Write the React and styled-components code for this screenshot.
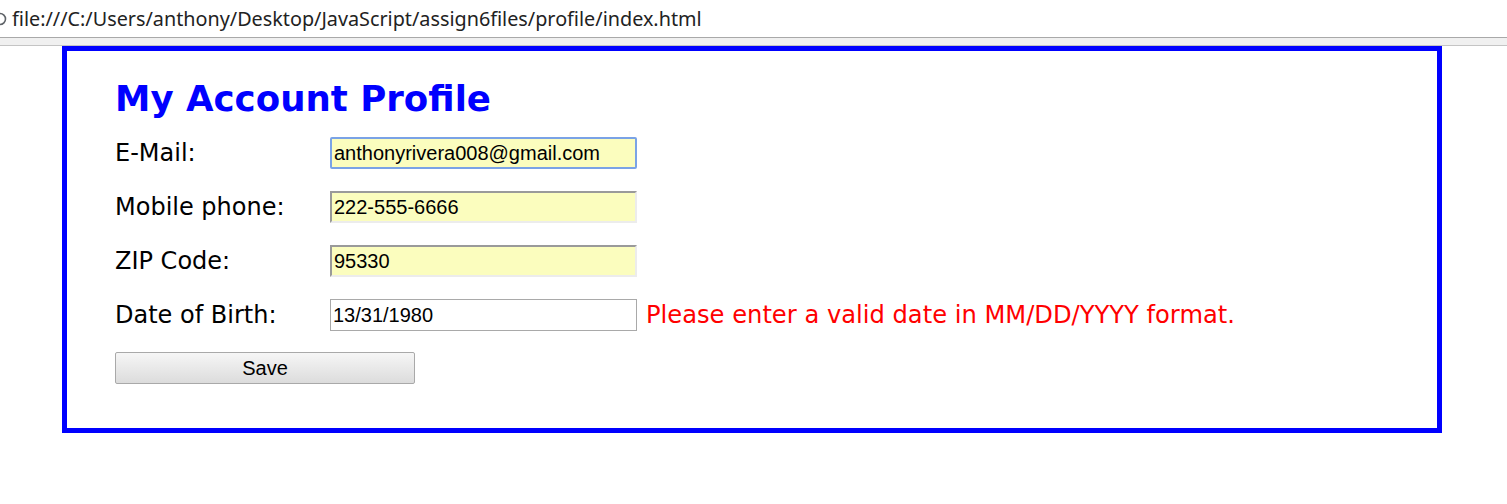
import React from "react";
import styled, { createGlobalStyle } from "styled-components";

const GlobalStyle = createGlobalStyle`
  html, body {
    margin: 0;
    padding: 0;
    background: #ffffff;
  }
`;

const AddressBar = styled.div`
  height: 37px;
  display: flex;
  align-items: center;
  gap: 5px;
  border-bottom: 1px solid #a9a9a9;
  overflow: hidden;
`;

const InfoIcon = styled.svg`
  margin-left: -7px;
  flex: none;
`;

const Url = styled.span`
  font-family: "Noto Sans", "Open Sans", sans-serif;
  font-size: 19.8px;
  color: #222;
`;

const Strip = styled.div`
  height: 7px;
  background: #f0f0f0;
  border-bottom: 1px solid #c4c4c4;
`;

const ProfileBox = styled.section`
  margin-left: 62px;
  width: 1380px;
  height: 387px;
  box-sizing: border-box;
  border: 5px solid #0000ff;
  padding: 27px 48px 0;
`;

const Title = styled.h1`
  margin: 0 0 6px;
  font-family: "DejaVu Sans", Verdana, sans-serif;
  font-weight: bold;
  font-size: 35.6px;
  color: #0000ff;
  line-height: 42px;
`;

const FormRow = styled.div`
  display: flex;
  align-items: center;
  height: 54px;
`;

const Label = styled.label`
  width: 215px;
  flex: none;
  font-family: "DejaVu Sans", Verdana, sans-serif;
  font-size: 24px;
  color: #000;
`;

const Field = styled.input`
  width: 307px;
  height: 32px;
  box-sizing: border-box;
  padding: 0 2px;
  font-family: "Liberation Sans", Arial, sans-serif;
  font-size: 20px;
  color: #000;
  outline: none;
  background: ${(p) => (p.$filled ? "#fbfdbe" : "#ffffff")};
  border-style: solid;
  border-width: ${(p) => (p.$filled ? "2px" : "1px")};
  border-color: ${(p) =>
    p.$focused
      ? "#7aa3e6"
      : p.$filled
      ? "#9a9a9a #ececec #ececec #9a9a9a"
      : "#a9a9a9"};
  border-radius: ${(p) => (p.$focused ? "2px" : "0")};
`;

const ErrorText = styled.span`
  margin-left: 9px;
  font-family: "DejaVu Sans", Verdana, sans-serif;
  font-size: 24.2px;
  color: #ff0000;
`;

const SaveButton = styled.button`
  margin-top: 10px;
  width: 300px;
  height: 32px;
  border: 1px solid #a9a9a9;
  border-radius: 2px;
  background: linear-gradient(#f6f6f6, #dcdcdc);
  font-family: "Liberation Sans", Arial, sans-serif;
  font-size: 20px;
  color: #000;
`;

const fields = [
  { label: "E-Mail:", value: "anthonyrivera008@gmail.com", filled: true, focused: true },
  { label: "Mobile phone:", value: "222-555-6666", filled: true },
  { label: "ZIP Code:", value: "95330", filled: true },
  {
    label: "Date of Birth:",
    value: "13/31/1980",
    error: "Please enter a valid date in MM/DD/YYYY format.",
  },
];

export default function App() {
  return (
    <>
      <GlobalStyle />
      <AddressBar>
        <InfoIcon width="14" height="14" viewBox="0 0 14 14">
          <circle cx="7" cy="7" r="5.5" fill="none" stroke="#5f6368" strokeWidth="1.6" />
        </InfoIcon>
        <Url>file:///C:/Users/anthony/Desktop/JavaScript/assign6files/profile/index.html</Url>
      </AddressBar>
      <Strip />
      <ProfileBox>
        <Title>My Account Profile</Title>
        {fields.map((f) => (
          <FormRow key={f.label}>
            <Label>{f.label}</Label>
            <Field
              defaultValue={f.value}
              $filled={f.filled}
              $focused={f.focused}
              readOnly
            />
            {f.error && <ErrorText>{f.error}</ErrorText>}
          </FormRow>
        ))}
        <SaveButton>Save</SaveButton>
      </ProfileBox>
    </>
  );
}
